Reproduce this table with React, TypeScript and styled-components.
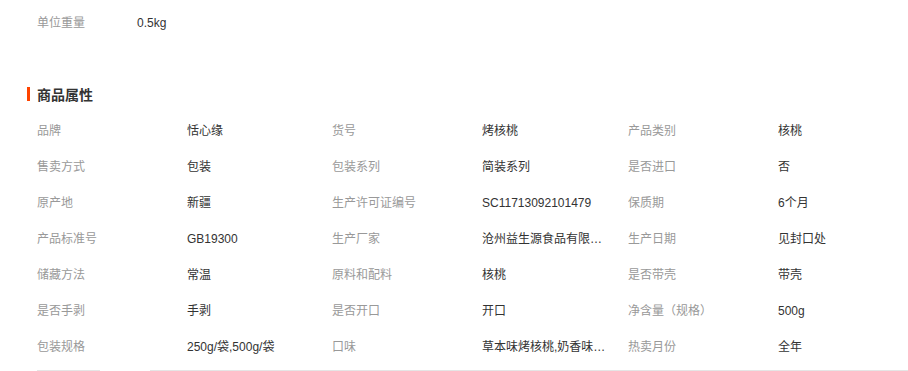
import React from 'react';
import styled, { createGlobalStyle } from 'styled-components';

const GlobalStyle = createGlobalStyle`
  body {
    margin: 0;
    background: #ffffff;
    font-family: Arial, "Noto Sans CJK SC", sans-serif;
    font-size: 12px;
  }
`;

type Attr = { label: string; value: string };

const attrs: Attr[] = [
    { label: '品牌', value: '恬心缘' },
    { label: '货号', value: '烤核桃' },
    { label: '产品类别', value: '核桃' },
    { label: '售卖方式', value: '包装' },
    { label: '包装系列', value: '简装系列' },
    { label: '是否进口', value: '否' },
    { label: '原产地', value: '新疆' },
    { label: '生产许可证编号', value: 'SC11713092101479' },
    { label: '保质期', value: '6个月' },
    { label: '产品标准号', value: 'GB19300' },
    { label: '生产厂家', value: '沧州益生源食品有限公司' },
    { label: '生产日期', value: '见封口处' },
    { label: '储藏方法', value: '常温' },
    { label: '原料和配料', value: '核桃' },
    { label: '是否带壳', value: '带壳' },
    { label: '是否手剥', value: '手剥' },
    { label: '是否开口', value: '开口' },
    { label: '净含量（规格）', value: '500g' },
    { label: '包装规格', value: '250g/袋,500g/袋' },
    { label: '口味', value: '草本味烤核桃,奶香味烤核桃' },
    { label: '热卖月份', value: '全年' },
];

const Page = styled.div`
  width: 908px;
  height: 371px;
  overflow: hidden;
`;

const SpecRow = styled.div`
  display: flex;
  align-items: center;
  height: 36px;
  padding: 5px 0 0 37px;
  line-height: 36px;
`;

const SpecLabel = styled.span`
  width: 100px;
  color: #999999;
`;

const SpecValue = styled.span`
  color: #333333;
`;

const Title = styled.h3`
  display: flex;
  align-items: center;
  margin: 37px 0 0 27px;
  height: 32px;
  font-size: 14px;
  font-weight: bold;
  color: #333333;

  &::before {
    content: '';
    width: 3px;
    height: 14px;
    margin-right: 7px;
    background: #ff4400;
  }
`;

const Grid = styled.div`
  display: grid;
  grid-template-columns: 150px 145px 150px 146px 150px 1fr;
  padding: 0 0 0 37px;
  margin-top: 3px;
`;

const Cell = styled.div<{ $value?: boolean }>`
  height: 36px;
  line-height: 36px;
  color: ${ p => p.$value ? '#333333' : '#999999' };
  padding-right: ${ p => p.$value ? '20px' : '0' };
  white-space: nowrap;
  overflow: hidden;
  text-overflow: ellipsis;
`;

const Tabs = styled.div`
  display: flex;
  gap: 50px;
  margin-top: 5px;
  padding-left: 37px;
`;

const TabLine = styled.div<{ $grow?: boolean }>`
  height: 1px;
  background: #e5e5e5;
  width: ${ p => p.$grow ? 'auto' : '63px' };
  flex: ${ p => p.$grow ? 1 : 'none' };
`;

const App = () => {
    return (
        <Page>
            <GlobalStyle/>
            <SpecRow>
                <SpecLabel>单位重量</SpecLabel>
                <SpecValue>0.5kg</SpecValue>
            </SpecRow>

            <Title>商品属性</Title>

            <Grid>
                { attrs.map((a, i) => (
                    <React.Fragment key={ i }>
                        <Cell>{ a.label }</Cell>
                        <Cell $value title={ a.value }>{ a.value }</Cell>
                    </React.Fragment>
                )) }
            </Grid>

            <Tabs>
                <TabLine/>
                <TabLine $grow/>
            </Tabs>
        </Page>
    )
}

export default App;
